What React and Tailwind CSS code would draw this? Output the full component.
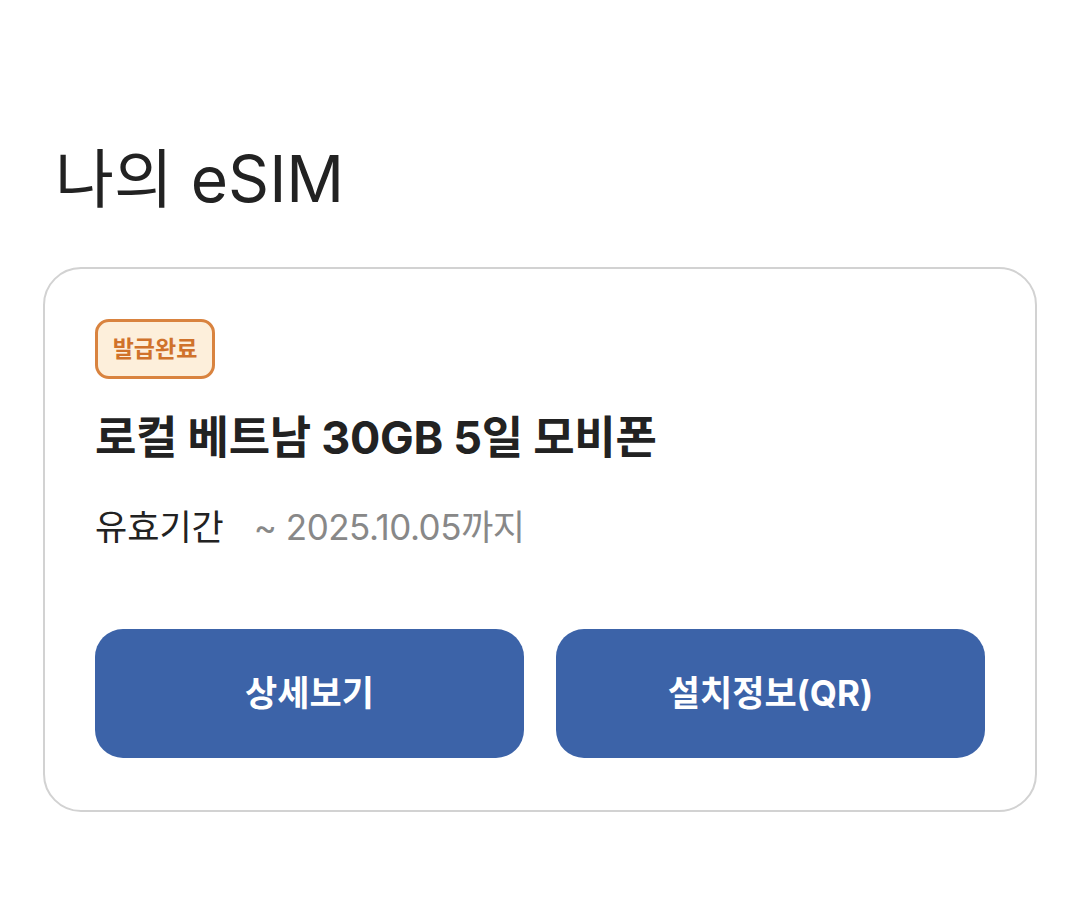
export default function App() {
  return (
    <div
      className="min-h-[914px] w-[1079px] bg-white text-[#222222]"
      style={{ fontFamily: 'Inter, "Noto Sans CJK KR", sans-serif' }}
    >
      <div className="px-[43px] pt-[135px]">
        <h1 className="pl-[12px] text-[64px] font-normal leading-[88px]">
          나의 eSIM
        </h1>

        <div className="mt-[44px] w-[994px] rounded-[38px] border-2 border-[#d2d2d2] px-[50px] pt-[50px] pb-[52px]">
          <span className="inline-flex h-[60px] w-[120px] items-center justify-center rounded-[14px] border-[3px] border-[#d9833f] bg-[#fdefdb] text-[23px] font-bold text-[#d0722b]">
            발급완료
          </span>

          <h2 className="mt-[31px] text-[45px] font-bold leading-[56px] tracking-[-0.3px]">
            로컬 베트남 30GB 5일 모비폰
          </h2>

          <div className="mt-[39px] flex items-center text-[35px] leading-[44px]">
            <span className="text-[#222222]">유효기간</span>
            <span className="ml-[30px] tracking-[-0.5px] text-[#888888]">~ 2025.10.05까지</span>
          </div>

          <div className="mt-[80px] grid grid-cols-2 gap-[32px]">
            <button className="h-[129px] rounded-[28px] bg-[#3c63a8] text-[35px] font-bold text-white">
              상세보기
            </button>
            <button className="h-[129px] rounded-[28px] bg-[#3c63a8] text-[35px] font-bold text-white">
              설치정보(QR)
            </button>
          </div>
        </div>
      </div>
    </div>
  );
}
